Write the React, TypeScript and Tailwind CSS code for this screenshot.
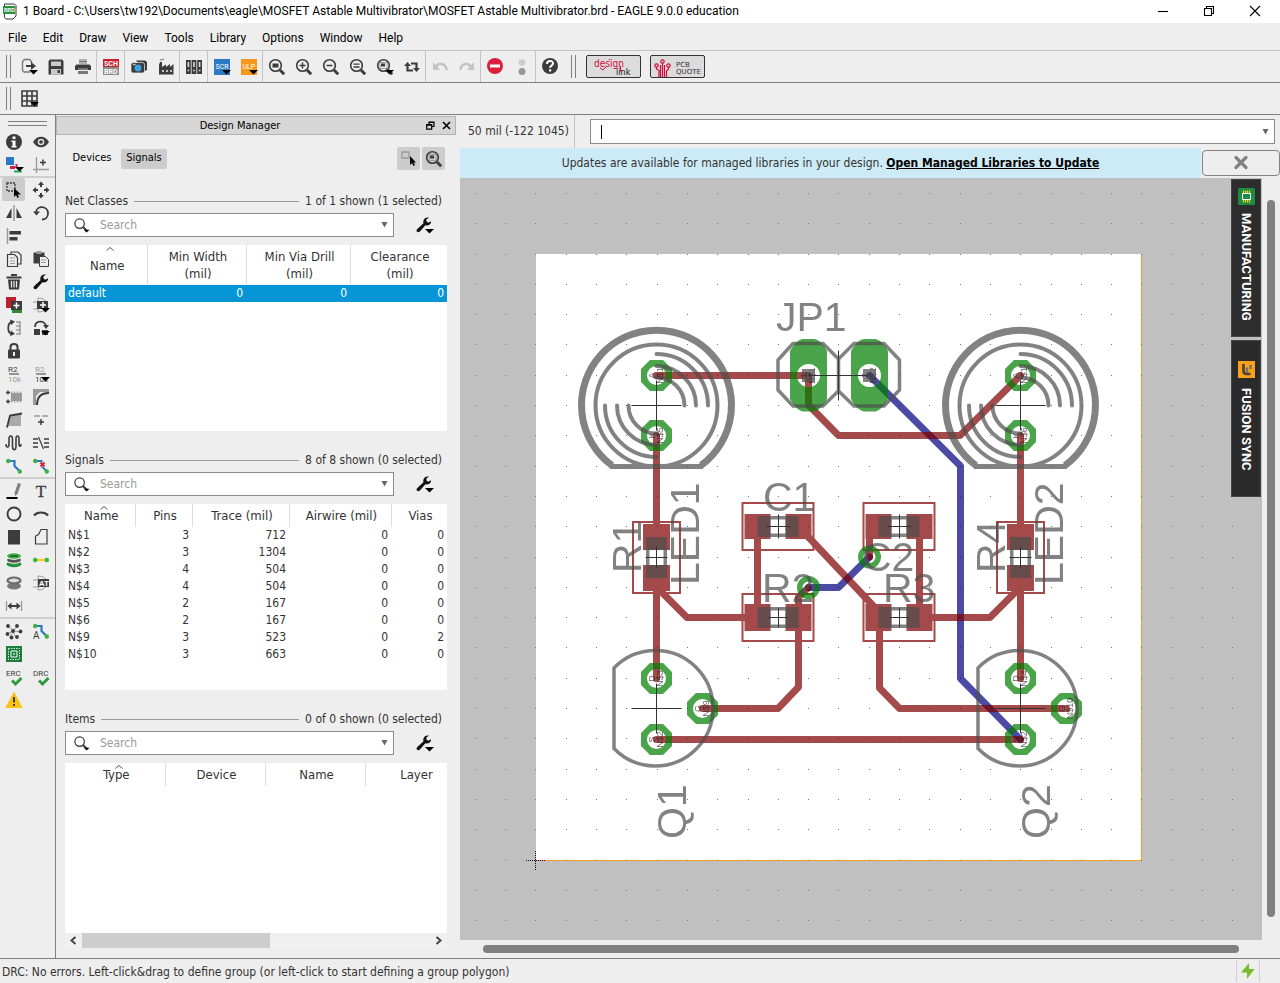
import React from "react";

type Icon = React.ReactNode;
const D = "#3c3c3c";
const G = "#9a9a9a";
const GREEN = "#3faf46";
const BLUE = "#2b78c5";

const drop = <path d="M9 12h9l-4.500 4.500z" fill="#000" />;
const lens = (
  <>
    <circle cx="7.500" cy="7.500" r="5.800" fill="none" stroke={D} strokeWidth="1.600" />
    <path d="M12 12l4.200 4.200" stroke={D} strokeWidth="3" />
  </>
);
const wrench = (
  <path
    d="M16 5.200l-2.600 1.600-2-1.200.1-2.400L14 1.700C11.500.8 8.600 2.400 8.300 5.200c-.1.800 0 1.500.2 2.100L2.300 13c-1 .9-.9 2.100-.2 2.800.8.700 2 .700 2.800-.3l5.500-6.300c3 .8 5.900-1 5.600-4z"
    fill="#111"
  />
);
const route = (
  <>
    <path d="M3.500 4h6v5l5 5" fill="none" stroke={BLUE} strokeWidth="2.200" />
    <circle cx="3.200" cy="4" r="2.200" fill={GREEN} />
    <circle cx="14.800" cy="14.500" r="2.200" fill={GREEN} />
  </>
);
const check = (
  <path d="M7 12.500l3.500 3.500L16.500 10" fill="none" stroke="#2e9a3a" strokeWidth="3" />
);
const iconText = (s: string, x: number, y: number, size: number, fill: string, bold = false) => (
  <text x={x} y={y} fontSize={size} fill={fill} fontWeight={bold ? 700 : 400} fontFamily="Roboto, Liberation Sans, sans-serif">
    {s}
  </text>
);

const icons: Record<string, Icon> = {
  export: (
    <>
      <path d="M11.500 5V3.500l-2-2H4.500l-2 2v9l1.500 1.500h6" fill="none" stroke="#777" strokeWidth="1.400" />
      <path d="M6 8h7" stroke={D} strokeWidth="2" />
      <path d="M11 4l5 4-5 4z" fill={D} />
      {drop}
    </>
  ),
  save: (
    <>
      <path d="M3 1.500h12l1.500 1.500v13.500h-15V3z" fill={D} />
      <path d="M4 3.500h10V8H4zM4 11h10v5.500H4z" fill="#c9c9c9" />
      <path d="M10.500 12h2.500v3h-2.500z" fill={D} />
    </>
  ),
  print: (
    <>
      <path d="M5 1h8v5H5z" fill="#b0b0b0" />
      <path d="M5 3.500h8" stroke="#777" />
      <path d="M1 8l1.500-1.500h13L17 8v4H1z" fill={D} />
      <path d="M4 10h10v6H4z" fill="#777" />
      <path d="M4 12.500h10" stroke="#eee" />
    </>
  ),
  schbrd: (
    <>
      <path d="M1 1h16v8H1z" fill="#c8202e" />
      <path d="M1 9h16v8H1z" fill="#8d8d8d" />
      {iconText("SCH", 2, 8, 7, "#fff", true)}
      {iconText("BRD", 2, 16, 7, "#fff", true)}
    </>
  ),
  camera: (
    <>
      <path d="M6 2.500h9l2 1.500v8l-2 1z" fill={D} />
      <rect x="1" y="4.500" width="13.500" height="10.500" rx="2" fill={D} stroke="#eee" strokeWidth=".7" />
      <circle cx="8" cy="10" r="3.500" fill="#3f9fdf" />
      <path d="M3 6.500h2.500" stroke="#ccc" strokeWidth="1.300" />
    </>
  ),
  factory: (
    <>
      <path d="M2 16.500V7l1-3h2v5l4-2.500V9l4-3v3l3.500-3v10.500z" fill={D} />
      <path d="M3 2.500c1.500-1.500 3-.5 4-1.500" stroke={G} fill="none" strokeWidth="1.500" />
      <path d="M5 13h2m2 0h2m2 0h2" stroke="#eee" strokeWidth="1.500" />
    </>
  ),
  library: (
    <>
      <path d="M1 2h4.800v14H1zM6.600 2h4.800v14H6.600zM12.200 2H17v14h-4.800z" fill={D} />
      <path d="M3.400 4v5M9 4v5M14.600 4v5" stroke="#ddd" strokeWidth="1.600" />
      <path d="M2.600 12.500h1.600M8.200 12.500h1.600M13.800 12.500h1.600" stroke="#ddd" strokeWidth="1.600" />
    </>
  ),
  scr: (
    <>
      <path d="M1 1h16v16H1z" fill={BLUE} />
      {iconText("SCR", 2.500, 11, 7, "#fff")}
      {drop}
    </>
  ),
  ulp: (
    <>
      <path d="M1 1h16v16H1z" fill="#f7981d" />
      {iconText("ULP", 2.500, 11, 7, "#fff")}
      {drop}
    </>
  ),
  fit: <>{lens}<path d="M4.500 5.500h6v4h-6z" fill={D} /></>,
  zin: <>{lens}<path d="M4.500 7.500h6m-3-3v6" stroke={D} strokeWidth="1.500" /></>,
  zout: <>{lens}<path d="M4.500 7.500h6" stroke={D} strokeWidth="1.500" /></>,
  zred: <>{lens}<path d="M4.500 6.200h6M4.500 9h6" stroke={D} strokeWidth="1.300" /></>,
  zsel: (
    <>
      {lens}
      <path d="M4 4.500h7v6H4z" fill="none" stroke={G} />
      <path d="M5 5.500h4v3H5z" fill={D} />
    </>
  ),
  zselDrop: (
    <>
      {lens}
      <path d="M4 4.500h7v6H4z" fill="none" stroke={G} />
      <path d="M5 5.500h4v3H5z" fill={D} />
      {drop}
    </>
  ),
  refresh: (
    <>
      <path d="M4.500 7v5.500H10M13.500 11V5.500H8" fill="none" stroke={D} strokeWidth="2.200" />
      <path d="M1 8l3.500-4L8 8zM10 10h7l-3.500 4z" fill={D} />
    </>
  ),
  undo: <><path d="M5 9c3-5 9-4 11 3" fill="none" stroke="#c4c4c4" strokeWidth="2.500" /><path d="M2 4v8h7z" fill="#c4c4c4" /></>,
  redo: <><path d="M13 9c-3-5-9-4-11 3" fill="none" stroke="#c4c4c4" strokeWidth="2.500" /><path d="M16 4v8H9z" fill="#c4c4c4" /></>,
  stop: <><circle cx="9" cy="8" r="8" fill="#dc1f3c" /><path d="M4 6.500h10v3H4z" fill="#fff" /></>,
  go: <><circle cx="9" cy="4.500" r="3.300" fill="#cbcbcb" /><circle cx="9" cy="13.500" r="3.500" fill="#969696" /></>,
  help: (
    <>
      <circle cx="9" cy="8" r="8" fill={D} />
      <path d="M6 6c0-4 6-4 6-.500 0 2-3 2.200-3 4.200" fill="none" stroke="#fff" strokeWidth="2" />
      <path d="M8 11.300h2.200v2.200H8z" fill="#fff" />
    </>
  ),
  grid: (
    <>
      <path d="M1 1h15v15H1zM6 1v15m5-15v15M1 6h15m-15 5h15" fill="none" stroke={D} strokeWidth="1.600" />
      {drop}
    </>
  ),
  info: <><circle cx="9" cy="9" r="8" fill={D} /><path d="M7.500 3.500h3v2.500h-3zM6.500 7.500h4V13h1v1.500h-5V13h1V9h-1z" fill="#fff" /></>,
  eye: <><path d="M1 9c4-7 12-7 16 0-4 7-12 7-16 0z" fill={D} /><circle cx="9" cy="9" r="3.300" fill="#ddd" /><circle cx="9" cy="9" r="1.800" fill={D} /></>,
  layers: (
    <>
      <path d="M1 1h8v8H1z" fill={BLUE} />
      <path d="M10 5v8H5v-3h5z" fill="#d81b4e" />
      <path d="M9 14.500h8v2H9z" fill="#27a55a" />
      <path d="M11.500 8v4" stroke="#d81b4e" strokeWidth="2" />
      <path d="M10 11h9l-4.500 4.500z" fill="#000" />
    </>
  ),
  mark: <><path d="M4.500 1v16M1 13.500h16" stroke={G} strokeWidth="1.300" /><path d="M8 6.500h6m-3-3v6" stroke={D} strokeWidth="1.500" /></>,
  group: (
    <>
      <path d="M2 2h8v8H2z" fill="none" stroke={D} strokeWidth="1.300" strokeDasharray="2 1" />
      <path d="M9 7v9l2-2 1.500 3 1.500-1-1.500-2.500H16z" fill="#000" />
    </>
  ),
  cursor: (
    <>
      <path d="M2 2h7v6H2z" fill="none" stroke={G} strokeWidth="1.300" />
      <path d="M10 6v9l2-2 1.500 3 1.500-1-1.500-2.500H16z" fill="#000" />
    </>
  ),
  move: <path d="M9 .5L12 4h-2v2H8V4H6zM9 17.500L12 14h-2v-2H8v2H6zM.5 9L4 6v2h2v2H4v2zM17.500 9L14 6v2h-2v2h2v2z" fill={D} />,
  mirror: <><path d="M9 1v16" stroke={G} strokeWidth="1.500" /><path d="M6.500 4v10H1zM11.500 4v10H17z" fill={D} /></>,
  rotate: <><path d="M4 8c1-7 12-6.500 12 1.500 0 4-3 6-6 6" fill="none" stroke={D} strokeWidth="1.800" /><path d="M1 7.500h7l-3.500 4z" fill={D} /></>,
  align: <><path d="M2.500 1v16" stroke={G} strokeWidth="1.500" /><path d="M4.500 4H16v3.500H4.500zM4.500 10h8v3.500h-8z" fill={D} /></>,
  copy: (
    <>
      <path d="M6 4V2h7l3 3v9h-3" fill="none" stroke={D} strokeWidth="1.200" />
      <path d="M2.500 4.500h7l3 3v9h-10z" fill="#eee" stroke={D} strokeWidth="1.200" />
      <path d="M5 8h5M5 11h5M5 13.500h5" stroke={G} />
    </>
  ),
  paste: (
    <>
      <path d="M1.500 2.500h11v11h-11z" fill={D} /><path d="M4.500 1h5v3h-5z" fill={G} />
      <path d="M7.500 6.500h6l3 3v7h-9z" fill="#eee" stroke={D} /><path d="M9 10h5m-5 2.500h5" stroke={G} />
    </>
  ),
  trash: <><path d="M1.500 3.500h15v2h-15zM6 1h6v2H6zM3 6.500h12l-1 10H4z" fill={D} /><path d="M6.500 8v6.500M9 8v6.500M11.500 8v6.500" stroke="#eee" strokeWidth="1.200" /></>,
  wrench,
  wrenchDrop: <>{wrench}<path d="M10 13h9l-4.500 4.500z" fill="#000" /></>,
  add: <><path d="M1 1h10v11H1z" fill="#c0202e" /><path d="M7 13h10v4H7z" fill="#2c8a35" /><path d="M6 5h11v9H6z" fill={D} /><path d="M8.500 9.500h6m-3-3v6" stroke="#fff" strokeWidth="1.600" /></>,
  addPart: <><path d="M1 6h4m-4 7h4M6 2c6 0 9 3 9 7s-3 7-9 7z" fill="none" stroke={G} /><path d="M5 5h11v8H5z" fill={D} /><path d="M8 9h6m-3-3v6" stroke="#fff" strokeWidth="1.500" />{drop}</>,
  pinswap: <><path d="M15 2v14M11 3h4m-4 4h4m-4 4h4m-4 4h4" stroke={G} strokeWidth="1.500" /><path d="M7 3C2 4 2 14 7 15" fill="none" stroke={D} strokeWidth="1.800" /><path d="M5 .5l5 2L6 6zM6 11.500l4 3.500-5 2z" fill={D} /></>,
  replace: <><path d="M3 8c0-7 10-7 11-1" fill="none" stroke={D} strokeWidth="1.800" /><path d="M11 6h6l-3 4zM2 10h6v6H2zM10 11h6v5h-6z" fill={D} />{drop}</>,
  lock: <><path d="M5.500 8V5c0-4 7-4 7 0v3" fill="none" stroke={D} strokeWidth="2" /><rect x="3" y="7.500" width="12" height="9" rx="1" fill={D} /><path d="M9 10v4" stroke="#eee" strokeWidth="2" /></>,
  name: <>{iconText("R2", 3, 7, 8, D)}<path d="M4 9h10" stroke={D} />{iconText("10k", 3, 17, 8, G)}</>,
  value: <>{iconText("R2", 3, 7, 8, G)}<path d="M4 9h10" stroke={D} />{iconText("10k", 3, 17, 8, D)}{drop}</>,
  smash: <><path d="M6 5h11v8H6z" fill={G} /><path d="M6.500 3.500v11m3-11v11m3-11v11m3-11v11" stroke={G} strokeWidth="1.200" /><path d="M1 4.500h4m-2-2v4M1 13.500h4m-2-2v4" stroke={D} strokeWidth="1.300" /></>,
  miter: <><path d="M1 1h16v3H8L4 8v9H1z" fill={G} /><path d="M5 17c0-8 4-12 12-12" fill="none" stroke={D} strokeWidth="2" /></>,
  split: <><path d="M5 5l11-2v12H3z" fill="#aaa" /><path d="M2 16.500L5 4.500l12-2" fill="none" stroke={D} strokeWidth="1.800" /></>,
  optimize: <><path d="M2 5h6m2 0h6" stroke={G} strokeWidth="1.300" /><path d="M6 11h6m-3-3v6" stroke={D} strokeWidth="1.500" /></>,
  meander: <path d="M1 10c0 4 3 4 3 0V5c0-4 3.500-4 3.500 0v7c0 5 3.500 5 3.500 0V5c0-4 3-4 3 0v5c0 3 2 3 2 0" fill="none" stroke={D} strokeWidth="1.600" />,
  ripup: <><path d="M1 5h5m-5 4h5m-5 4h5m6-8h5m-5 4h5m-5 4h5" stroke={D} strokeWidth="1.500" /><path d="M6.500 3l5 12" stroke={D} strokeWidth="1.200" /></>,
  route,
  unroute: <><path d="M3.500 4h6v5l5 5" fill="none" stroke={BLUE} strokeWidth="2" /><circle cx="3.200" cy="4" r="2.200" fill={GREEN} /><circle cx="14.800" cy="14.500" r="2.200" fill={GREEN} /><path d="M8 5h5v5H8z" fill="#fff" /><path d="M8.500 5.500l4 4m0-4l-4 4" stroke="#d81b2e" strokeWidth="2" /></>,
  line: <><path d="M1.500 16h11" stroke="#000" strokeWidth="2" /><path d="M13 1l3 1-3.500 10-2.500 2-.5-3z" fill="#808080" /></>,
  text: <text x="9" y="15" fontSize="17" textAnchor="middle" fontFamily="Liberation Serif, serif" fill={D} stroke={D} strokeWidth=".3">T</text>,
  circle: <circle cx="9" cy="9" r="6.500" fill="none" stroke={D} strokeWidth="1.900" />,
  arc: <path d="M2 10.500c3-4 11-4 14 0" fill="none" stroke={D} strokeWidth="2.200" />,
  rect: <path d="M3 2h12v14.500H3z" fill={D} />,
  polygon: <path d="M3.500 16V8l3-1.500 2.500-5h6V16z" fill="none" stroke={D} strokeWidth="1.200" />,
  via: <><ellipse cx="9" cy="13" rx="7.500" ry="3.300" fill="#27923a" /><ellipse cx="9" cy="9" rx="7.500" ry="3.300" fill="#555" stroke="#fff" /><ellipse cx="9" cy="5" rx="7.500" ry="3.300" fill={GREEN} stroke="#fff" /><path d="M5 5h8" stroke="#17602a" strokeWidth="1.500" /></>,
  airwire: <><path d="M3 9h12" stroke="#f4cf1c" strokeWidth="2.200" /><circle cx="3.200" cy="9" r="2.300" fill={GREEN} /><circle cx="14.800" cy="9" r="2.300" fill={GREEN} /></>,
  hole: <><ellipse cx="9" cy="12" rx="7" ry="3.500" fill="#777" /><ellipse cx="9" cy="6.500" rx="6.500" ry="3" fill="#ddd" stroke="#6b6b6b" strokeWidth="2.200" /></>,
  attr: <><path d="M1 6h4m-4 7h4M6 2c6 0 9 3 9 7s-3 7-9 7z" fill="none" stroke={G} /><path d="M6 5h11v8H6z" fill={D} />{iconText("AT", 7, 12, 8, "#fff", true)}</>,
  dimension: <><path d="M1.500 4v10m15-10v10" stroke={G} strokeWidth="1.300" /><path d="M4 9h10" stroke={D} strokeWidth="2" /><path d="M2.500 9l4-3.500v7zM15.500 9l-4-3.500v7z" fill={D} /></>,
  ratsnest: <><path d="M8 9L3 3.500M8 9l5-5.500M8 9l8 1M8 9l-6 3M8 9l3 7M8 9l-3 6" stroke={G} />{[[8, 9], [3, 4], [12, 4], [15.500, 9.500], [2.500, 12], [6.500, 15.500], [12, 15]].map(([x, y]) => <circle key={`${x}-${y}`} cx={x} cy={y} r="1.900" fill={D} />)}</>,
  autoroute: <>{route}{iconText("A", 1, 17, 10, D)}</>,
  fusion: <><path d="M1 1h16v16H1z" fill="#1d7d3b" /><path d="M3.500 3.500h11v11h-11z" fill="none" stroke="#c5e4cd" strokeDasharray="1.500 1" /><path d="M6 6h6v6H6z" fill="none" stroke="#fff" /><path d="M8 8h2v2H8z" fill="#8fcf9f" /></>,
  erc: <>{iconText("ERC", 1, 8, 8, D)}{check}</>,
  drc: <>{iconText("DRC", 1, 8, 8, D)}{check}</>,
  warn: <><path d="M9 1.500L17 16.500H1z" fill="#f9c416" stroke="#f9c416" strokeLinejoin="round" /><path d="M9 6v5.500M9 13v2" stroke="#333" strokeWidth="1.800" /></>,
};

function Glyph({ name }: { name: string }) {
  return (
    <svg viewBox="0 0 18 18" className="size-[18px] shrink-0 overflow-visible" aria-hidden="true">
      {icons[name]}
    </svg>
  );
}

function Tool({ name, active }: { name: string; active?: boolean }) {
  return (
    <button
      aria-label={name}
      className={`flex size-[23px] shrink-0 items-center justify-center rounded-[2px] ${active ? "bg-[#cccccc]" : ""}`}
    >
      <Glyph name={name} />
    </button>
  );
}

const Handle = () => <div className="my-1 w-[5px] shrink-0 self-stretch border-x border-[#808080]" />;

const mainTools = [
  ["export", "save", "print"],
  ["schbrd"],
  ["camera", "factory"],
  ["library"],
  ["scr", "ulp"],
  ["fit", "zin", "zout", "zred", "zselDrop", "refresh"],
  ["undo", "redo"],
  ["stop", "go"],
  ["help"],
];

const sideTools: string[][] = [
  ["info", "eye", "layers", "mark"],
  [
    "group", "move", "mirror", "rotate", "align", "", "copy", "paste", "trash", "wrench", "add", "addPart",
    "pinswap", "replace", "lock", "", "name", "value", "smash", "miter", "split", "optimize", "meander", "ripup",
    "route", "unroute",
  ],
  ["line", "text", "circle", "arc", "rect", "polygon", "via", "airwire", "hole", "attr", "dimension", ""],
  ["ratsnest", "autoroute", "fusion", "", "erc", "drc", "warn", ""],
];

function TitleBar() {
  return (
    <header className="flex h-[23px] shrink-0 items-start bg-white pr-0.5 pl-[3px] text-black">
      <svg viewBox="0 0 14 17" className="mt-[3px] h-[17px] w-[14px]" aria-hidden="true">
        <path d="M2 1h9.500l1.500 1.500V13l-3 3H3l-1.500-1.500V1z" fill="#fff" stroke="#333" />
        <path d="M0 3h12v8H0z" fill="#27923a" />
        <text x="1" y="9" fontSize="5" fontWeight="700" fill="#fff" fontFamily="Liberation Sans, sans-serif">BRD</text>
      </svg>
      <h1 className="ml-1.5 flex-1 font-['Roboto','Noto_Sans',sans-serif] text-[12px] leading-[23px] whitespace-nowrap">
        1 Board - C:\Users\tw192\Documents\eagle\MOSFET Astable Multivibrator\MOSFET Astable Multivibrator.brd - EAGLE
        9.0.0 education
      </h1>
      <div className="flex">
        {[
          ["Minimize", "M1 6.500h10"],
          ["Restore", "M1.500 3.500h7v7h-7zM3.500 3.500v-2h7v7h-2"],
          ["Close", "M1 1l10 10M11 1L1 11"],
        ].map(([label, d]) => (
          <button key={label} aria-label={label} className="flex h-[21px] w-[46px] items-center justify-center">
            <svg viewBox="0 0 12 12" className="size-3" aria-hidden="true">
              <path d={d} fill="none" stroke="#000" strokeWidth="1.100" />
            </svg>
          </button>
        ))}
      </div>
    </header>
  );
}

function MainToolbar() {
  return (
    <div className="flex h-8 shrink-0 items-center border-b border-[#808080] pl-1.5">
      <Handle />
      <div className="ml-1 flex self-stretch">
        {mainTools.map((g, i) => (
          <div key={i} className={`flex items-center ${i ? "border-l border-[#c4c4c4]" : ""}`}>
            {g.map((n) => (
              <div key={n} className="px-0.5">
                <Tool name={n} />
              </div>
            ))}
          </div>
        ))}
      </div>
      <div className="ml-2 flex self-stretch">
        <Handle />
      </div>
      <button aria-label="Design link" className="ml-2.5 h-[23px] w-[55px] rounded-[2px] border border-[#333] bg-[#dcdcdc]">
        <svg viewBox="0 0 53 21" className="h-[21px] w-[53px]" aria-hidden="true">
          <text x="7" y="11" fontSize="10" fill="#d6093c" fontFamily="DejaVu Sans Condensed, sans-serif">design</text>
          <text x="29" y="19" fontSize="9" fill="#111" fontFamily="DejaVu Sans Condensed, sans-serif">link</text>
          <path d="M33.500 10v5M13 12l3 2 3-3M22.500 3v1" stroke="#d6093c" fill="none" />
          <circle cx="33.500" cy="14.500" r="1" fill="#d6093c" />
        </svg>
      </button>
      <button aria-label="PCB quote" className="ml-[9px] h-[23px] w-[55px] rounded-[2px] border border-[#333] bg-[#dcdcdc]">
        <svg viewBox="0 0 53 21" className="h-[21px] w-[53px]" aria-hidden="true">
          <g fill="none" stroke="#d6093c" strokeWidth="1.200">
            <path d="M5.500 11v2l2.500 1.500V21M9.500 21V9M11.500 7v14M13.500 9v12M17.500 11v2L15.500 15V21" />
            <circle cx="5.500" cy="9.500" r="1.700" /><circle cx="11.500" cy="5.500" r="1.700" /><circle cx="17.500" cy="9.500" r="1.700" />
          </g>
          <text x="25" y="11" fontSize="7" fill="#333" fontFamily="DejaVu Sans, sans-serif">PCB</text>
          <text x="25" y="18" fontSize="7" fill="#333" fontFamily="DejaVu Sans, sans-serif">QUOTE</text>
        </svg>
      </button>
    </div>
  );
}

function ToolPalette() {
  return (
    <aside className="flex w-14 shrink-0 flex-col border-r border-[#808080]">
      <div className="mx-2 mt-1.5 mb-1 h-[5px] shrink-0 border-y border-[#808080]" />
      {sideTools.map((g, i) => (
        <div key={i} className={`grid grid-cols-[23px_23px] gap-x-1 px-0.5 ${i ? "border-t-2 border-[#cfcfcf]" : ""}`}>
          {g.map((n, j) => (n ? <Tool key={n} name={n} active={n === "group"} /> : <span key={j} />))}
        </div>
      ))}
    </aside>
  );
}

function Search({ label }: { label: string }) {
  return (
    <div className="mt-[3px] flex h-6 items-center">
      <label className="flex h-6 w-[329px] items-center border border-[#8c8c8c] bg-white pl-[7px]">
        <svg viewBox="0 0 18 18" className="size-[17px]" aria-hidden="true">
          <circle cx="7" cy="7" r="5" fill="none" stroke={D} strokeWidth="1.300" />
          <path d="M10.500 10.500l4 4" stroke={D} strokeWidth="2.200" />
          <path d="M11.500 13.500h6l-3 3z" fill="#000" />
        </svg>
        <input
          aria-label={`Search ${label}`}
          placeholder="Search"
          className="ml-2.5 min-w-0 flex-1 bg-transparent text-[12px] outline-none placeholder:text-[#9a9a9a]"
        />
        <svg viewBox="0 0 7 6" className="mr-[5px] h-1.5 w-[7px]" aria-hidden="true">
          <path d="M.5 0h6L3.500 5.500z" fill="#666" />
        </svg>
      </label>
      <div className="ml-[18px]">
        <Tool name="wrenchDrop" />
      </div>
    </div>
  );
}

type TableProps = { cols: [string, number][]; rows: string[][]; tall?: boolean; selected?: boolean };

function DataTable({ cols, rows, tall, selected }: TableProps) {
  const total = cols.reduce((s, c) => s + c[1], 0);
  return (
    <table className="table-fixed border-collapse text-[12px]" style={{ width: total }}>
      <colgroup>
        {cols.map(([c, w]) => (
          <col key={c} style={{ width: w }} />
        ))}
      </colgroup>
      <thead>
        <tr className={tall ? "h-10" : "h-[23px]"}>
          {cols.map(([c], i) => (
            <th key={c} className="relative border-r border-[#dedede] p-0 text-[13px] leading-[17px] font-normal">
              {i === 0 && (
                <svg viewBox="0 0 8 4" className="absolute top-0.5 left-1/2 h-1 w-2" aria-hidden="true">
                  <path d="M.5 3.500L4 .5l3.500 3" fill="none" stroke="#555" />
                </svg>
              )}
              <span className="block pl-[3px] whitespace-pre-line">{c}</span>
            </th>
          ))}
        </tr>
      </thead>
      <tbody>
        {rows.map((r) => (
          <tr key={r[0]} className={`h-[17px] ${selected ? "bg-[#0696d7] text-white" : ""}`}>
            {r.map((v, i) => (
              <td key={i} className={`px-[3px] py-0 leading-[17px] ${i ? "text-right" : ""}`}>
                {v}
              </td>
            ))}
          </tr>
        ))}
      </tbody>
    </table>
  );
}

function Section({ title, info, grow, children }: { title: string; info: string; grow?: boolean; children: React.ReactNode }) {
  return (
    <section className={`mr-[9px] ml-[9px] flex flex-col ${grow ? "min-h-0 flex-1" : "mb-5"}`}>
      <div className="flex h-[18px] items-center gap-1.5 pr-[5px] text-[12px]">
        <h3>{title}</h3>
        <div className="h-px flex-1 bg-[#999]" />
        <span>{info}</span>
      </div>
      <Search label={title} />
      <div className={`mt-2 overflow-hidden bg-white ${grow ? "min-h-0 flex-1" : "h-[186px]"}`}>{children}</div>
    </section>
  );
}

const signals = [
  ["N$1", "3", "712", "0", "0"],
  ["N$2", "3", "1304", "0", "0"],
  ["N$3", "4", "504", "0", "0"],
  ["N$4", "4", "504", "0", "0"],
  ["N$5", "2", "167", "0", "0"],
  ["N$6", "2", "167", "0", "0"],
  ["N$9", "3", "523", "0", "2"],
  ["N$10", "3", "663", "0", "0"],
];

function DesignManager() {
  return (
    <div className="flex w-[400px] shrink-0 flex-col">
      <div className="mt-px flex h-[19px] shrink-0 items-center border border-[#b4b4b4] bg-[#d6d6d6] text-black">
        <h2 className="flex-1 text-center text-[11px] leading-[21px]">Design Manager</h2>
        <button aria-label="Float" className="p-[3px]">
          <svg viewBox="0 0 9 9" className="size-[9px]" aria-hidden="true">
            <path d="M.7 3.700h5v4.500h-5zM3 3.500V1h5v4.500H6M3 1.500h5M.7 4.200h5" fill="none" stroke="#000" strokeWidth="1.200" />
          </svg>
        </button>
        <button aria-label="Close panel" className="px-1 py-[3px]">
          <svg viewBox="0 0 9 9" className="size-[9px]" aria-hidden="true">
            <path d="M1 1l7 7M8 1L1 8" stroke="#000" strokeWidth="1.600" />
          </svg>
        </button>
      </div>
      <div className="mt-3 mb-[22px] flex h-[23px] items-center pr-[11px] pl-[9px] text-[11px] text-black">
        <button className="h-5 w-[54px]">Devices</button>
        <button className="ml-0.5 h-5 w-[46px] rounded-[2px] bg-[#cccccc]">Signals</button>
        <div className="flex-1" />
        <div className="flex gap-0.5">
          <Tool name="cursor" active />
          <Tool name="zsel" active />
        </div>
      </div>
      <Section title="Net Classes" info="1 of 1 shown (1 selected)">
        <DataTable
          tall
          selected
          cols={[["Name", 82], ["Min Width\n(mil)", 99], ["Min Via Drill\n(mil)", 104], ["Clearance\n(mil)", 97]]}
          rows={[["default", "0", "0", "0"]]}
        />
      </Section>
      <Section title="Signals" info="8 of 8 shown (0 selected)">
        <DataTable
          cols={[["Name", 70], ["Pins", 57], ["Trace (mil)", 97], ["Airwire (mil)", 102], ["Vias", 56]]}
          rows={signals}
        />
      </Section>
      <Section title="Items" info="0 of 0 shown (0 selected)" grow>
        <DataTable cols={[["Type", 100], ["Device", 100], ["Name", 100], ["Layer", 100]]} rows={[]} />
      </Section>
      <div className="mx-[9px] mb-2.5 flex h-[15px] shrink-0 items-center bg-[#f0f0f0]">
        <svg viewBox="0 0 17 15" className="h-[15px] w-[17px]" aria-hidden="true">
          <path d="M10.500 4L6.500 7.500l4 3.500" fill="none" stroke="#444" strokeWidth="2" />
        </svg>
        <div className="flex-1 self-stretch">
          <div className="h-full w-[54%] bg-[#cdcdcd]" />
        </div>
        <svg viewBox="0 0 17 15" className="h-[15px] w-[17px]" aria-hidden="true">
          <path d="M6.500 4l4 3.500-4 3.500" fill="none" stroke="#444" strokeWidth="2" />
        </svg>
      </div>
    </div>
  );
}

/* ---- board drawing ---- */

const RED = "#7f0000";
const octagon = (cx: number, cy: number, r: number) => {
  const k = r * 0.42;
  return `M${cx - k} ${cy - r}H${cx + k}L${cx + r} ${cy - k}V${cy + k}L${cx + k} ${cy + r}H${cx - k}L${cx - r} ${cy + k}V${cy - k}z`;
};
const hole = (cx: number, cy: number, r: number) =>
  `M${cx - r} ${cy}a${r} ${r} 0 1 0 ${2 * r} 0a${r} ${r} 0 1 0 ${-2 * r} 0z`;

const pads: [number, number, string, string][] = [
  [656.5, 375.5, "A", "N$1"],
  [656.5, 435.5, "K", "N$5"],
  [1020.5, 375.5, "A", "N$1"],
  [1020.5, 435.5, "K", "N$6"],
  [656.5, 678.5, "D", "N$3"],
  [702.5, 708.5, "G", "N$9"],
  [656.5, 739.5, "S", "N$2"],
  [1020.5, 678.5, "D", "N$4"],
  [1066.5, 708.5, "G", "N$10"],
  [1020.5, 739.5, "S", "N$2"],
];
const longPads: [number, string, string][] = [
  [808.5, "1", "N$1"],
  [869.5, "2", "N$2"],
];
const vias: [number, number][] = [
  [808.5, 587.5],
  [869.5, 557],
];
const chips: [number, number, number, boolean][] = [
  [778, 526.5, 25, false],
  [899, 526.5, 25, false],
  [778, 617.5, 27, false],
  [899, 617.5, 27, false],
  [656.5, 557.5, 27, true],
  [1020.5, 557.5, 27, true],
];
const traces = [
  "M656.500 375.500H808.500V405L838.500 435.500H960L1020.500 375.500",
  "M656.500 435.500V524M656.500 590V678.500M656.500 587L687 617.500H745",
  "M757.500 530V610M798 526L879 612M798.500 610V597L808.500 587.500",
  "M798.500 617V687L778 708.500H702.500M869.500 526V557M919.500 530V610",
  "M930 617.500H990L1020.500 587M1020.500 590V678.500M1020.500 435.500V524",
  "M879.500 617V688L899.500 708.500H1066.500M656.500 739.500H1020.500",
];
const labels: [string, number, number, boolean][] = [
  ["JP1", 776, 331, false],
  ["C1", 763, 511, false],
  ["C2", 862, 571, false],
  ["R2", 762, 602, false],
  ["R3", 883, 602, false],
  ["R1", 641, 573, true],
  ["R4", 1005, 573, true],
  ["LED1", 699, 585, true],
  ["LED2", 1063, 585, true],
  ["Q1", 686, 839, true],
  ["Q2", 1050, 839, true],
];

function GridDots() {
  let d = "";
  for (let i = -2; i <= 23; i++)
    for (let j = -2; j <= 22; j++) d += `M${Math.round(535.4 + 30.3 * i)} ${Math.floor(860 - 30.3 * j)}h1v1h-1z`;
  return <path d={d} fill="#777" />;
}

function Led({ dx }: { dx: number }) {
  return (
    <g transform={`translate(${dx} 0)`} fill="none" stroke="#4f4f4f">
      <path d="M612 465.500A75 75 0 1 1 701 465.500" strokeWidth="7" />
      <path d="M610 466.500H703" strokeWidth="5" />
      <circle cx="656.500" cy="405.500" r="61" strokeWidth="4" />
      <g strokeWidth="4" strokeLinecap="round">
        <path d="M656.500 354A51.500 51.500 0 0 1 708 405.500M656.500 366A39.500 39.500 0 0 1 696 405.500M656.500 377.500A28 28 0 0 1 684.500 405.500" />
        <path d="M605 405.500A51.500 51.500 0 0 0 656.500 457M617 405.500A39.500 39.500 0 0 0 656.500 445M628.500 405.500A28 28 0 0 0 656.500 433.500" />
      </g>
    </g>
  );
}

function Board() {
  return (
    <svg viewBox="460 178 802 762" preserveAspectRatio="xMinYMin meet" className="block h-full w-full" role="img" aria-label="Board layout">
      <path d="M536 254h605.500v606.500H536z" fill="#fff" />
      <path d="M1141.500 254v606.500H536" fill="none" stroke="#f5a01e" />
      <GridDots />
      <g opacity=".706" fill="none" stroke="#00007f" strokeWidth="7" strokeLinejoin="round" strokeLinecap="round">
        <path d="M869.500 375.500L960.500 466V678.500L1020.500 739.500M808.500 587.500H838.500L869.500 557" />
      </g>
      <g opacity=".706" stroke={RED} fill={RED}>
        <path d={traces.join("")} fill="none" strokeWidth="7" strokeLinejoin="round" strokeLinecap="round" />
        {chips.map(([x, y, h, vertical]) => (
          <g key={`${x}-${y}`} transform={`translate(${x} ${y}) rotate(${vertical ? 90 : 0})`}>
            <path d="M-35.500 -23.500h71v47h-71z" fill="none" strokeWidth="2" />
            <path d={`M-33.500 ${-h / 2}h26v${h}h-26zM7.500 ${-h / 2}h26v${h}h-26z`} stroke="none" />
          </g>
        ))}
      </g>
      <g opacity=".706" fill="#007f00" fillRule="evenodd">
        {pads.map(([x, y]) => (
          <path key={`${x}-${y}`} d={octagon(x, y, 15.5) + hole(x, y, 9.5)} />
        ))}
        {longPads.map(([x]) => (
          <path
            key={x}
            d={`M${x - 6} 339h12q7 1.500 12.500 12v48q-5.500 10.500 -12.500 12.500h-12q-7 -2 -12.500 -12.500v-48q5.500 -10.500 12.500 -12z` + hole(x, 375.5, 11.5)}
          />
        ))}
        {vias.map(([x, y]) => (
          <path key={x} d={hole(x, y, 11.5) + hole(x, y, 6)} />
        ))}
      </g>
      <g opacity=".706">
        <Led dx={0} />
        <Led dx={364} />
        <g fill="none" stroke="#4f4f4f" strokeWidth="3.500">
          <path d="M614 668A57.700 57.700 0 1 1 614 748.500z" />
          <path d="M978 668A57.700 57.700 0 1 1 978 748.500z" />
          <path d="M778 360L793 343.500H823L838.500 359L854 343.500H884L899.500 360V390L884 406H854L838.500 391L823 406H793L778 390zM838.500 359V391" />
        </g>
        {chips.map(([x, y, , vertical]) => (
          <g key={`${x}-${y}`} transform={`translate(${x} ${y}) rotate(${vertical ? 90 : 0})`} fill="#4f4f4f">
            <path d="M-20.500 -10.500h13v21h-13zM7.500 -10.500h13v21h-13zM-8 -10.500h16v3.500h-16zM-8 7h16v3.500h-16z" />
          </g>
        ))}
        <path d="M802 369h13v13h-13zM863 369h13v13h-13z" fill="#4f4f4f" />
        {labels.map(([t, x, y, r]) => (
          <text
            key={t}
            transform={`translate(${x} ${y}) rotate(${r ? -90 : 0})`}
            fontSize="41"
            fill="#4f4f4f"
            fontFamily="Liberation Sans, Arial, sans-serif"
          >
            {t}
          </text>
        ))}
        {[...pads, ...longPads.map(([x, a, b]): [number, number, string, string] => [x, 375.5, a, b])].map(([x, y, a, b]) => (
          <g key={`${x}-${y}`} fontSize="9" fill="#222" textAnchor="middle" fontFamily="Liberation Sans, Arial, sans-serif">
            <text transform={`translate(${x - 2} ${y}) rotate(-90)`}>{a}</text>
            <text transform={`translate(${x + 6} ${y}) rotate(-90)`}>{b}</text>
          </g>
        ))}
      </g>
      <g stroke="#333">
        {[
          [656.5, 405.5, 25, 25], [1020.5, 405.5, 25, 25], [656.5, 708.5, 25, 25], [1020.5, 708.5, 25, 25], [838.5, 375.5, 30, 25],
          [778.5, 526.5, 12, 12], [899.5, 526.5, 12, 12], [778.5, 617.5, 10, 10], [899.5, 617.5, 10, 10], [656.5, 557.5, 11, 11],
          [1020.5, 557.5, 11, 11],
        ].map(([x, y, w, h]) => (
          <path key={`${x}-${y}`} d={`M${x - w} ${y}h${2 * w}M${x} ${y - h}v${2 * h}`} />
        ))}
      </g>
      <path d="M526 860.500h20M535.500 851v20" stroke="#111" strokeDasharray="1 1" />
    </svg>
  );
}

function Workspace() {
  return (
    <div className="flex min-w-0 flex-1 flex-col pl-1">
      <div className="flex h-[33px] shrink-0 items-center pr-[5px]">
        <span className="self-stretch border-r border-[#c4c4c4] pr-[5px] pl-2 text-[12px] leading-[33px] whitespace-nowrap">
          50 mil (-122 1045)
        </span>
        <div className="ml-[15px] flex h-[25px] flex-1 items-center border border-[#8c8c8c] bg-white pr-[5px] pl-2.5">
          <span className="h-3.5 w-px bg-black" />
          <input aria-label="Command" className="min-w-0 flex-1 bg-transparent text-[12px] outline-none" />
          <svg viewBox="0 0 7 6" className="h-1.5 w-[7px]" aria-hidden="true">
            <path d="M.5 0h6L3.500 5.500z" fill="#666" />
          </svg>
        </div>
      </div>
      <div className="flex h-[30px] shrink-0 items-center">
        <p className="flex-1 self-stretch bg-[#cdebf6] text-center text-[12px] leading-[30px] whitespace-nowrap">
          Updates are available for managed libraries in your design.{" "}
          <a href="#update" className="font-bold text-black underline">
            Open Managed Libraries to Update
          </a>
        </p>
        <button aria-label="Dismiss" className="ml-px flex h-[26px] w-[78px] items-center justify-center rounded-[4px] border border-[#828282]">
          <svg viewBox="0 0 16 16" className="size-4" aria-hidden="true">
            <path d="M3 2.500l10 10M13 2.500l-10 10" stroke="#808080" strokeWidth="3.200" strokeLinecap="round" />
          </svg>
        </button>
      </div>
      <div className="flex min-h-0 flex-1">
        <div className="relative min-w-0 flex-1 overflow-hidden bg-[#c0c0c0]">
          <Board />
          <div className="absolute top-px right-px flex flex-col gap-[3px]">
            <button className="flex h-[158px] w-[30px] flex-col items-center border border-[#444] bg-[#2d2d2d] pt-2">
              <svg viewBox="0 0 17 17" className="size-[17px]" aria-hidden="true">
                <rect width="17" height="17" rx="1.500" fill="#1f8c44" />
                <path d="M5.500 2.500v12M7.500 2.500v12M9.500 2.500v12M11.500 2.500v12" stroke="#f0d020" strokeWidth="1.200" />
                <path d="M4.500 5.500h8v6h-8z" fill="#1f8c44" stroke="#fff" />
              </svg>
              <span className="mt-2 font-['Roboto',sans-serif] text-[13px] leading-[14px] font-bold text-white [writing-mode:vertical-rl]">
                MANUFACTURING
              </span>
            </button>
            <button className="flex h-[157px] w-[30px] flex-col items-center border border-[#444] bg-[#2b2b2b] pt-5">
              <svg viewBox="0 0 17 17" className="size-[17px]" aria-hidden="true">
                <path d="M0 0h17v17H0z" fill="#f9a11b" />
                <path d="M5.500 3v7q0 3 3 3h4" fill="none" stroke="#4a4035" strokeWidth="2.600" />
                <path d="M9 12V6.500M12.500 8V4" stroke="#777067" strokeWidth="2.400" />
              </svg>
              <span className="mt-2.5 font-['Roboto',sans-serif] text-[13px] leading-[14px] font-bold text-white [writing-mode:vertical-rl]">
                FUSION SYNC
              </span>
            </button>
          </div>
        </div>
        <div className="w-[18px] shrink-0 pt-[22px] pr-[5px] pb-[23px] pl-[5px]">
          <div className="h-full rounded-full bg-[#808080]" />
        </div>
      </div>
      <div className="h-[18px] shrink-0 pt-[5px] pr-[41px] pl-[23px]">
        <div className="h-2 rounded-full bg-[#808080]" />
      </div>
    </div>
  );
}

const menus = ["File", "Edit", "Draw", "View", "Tools", "Library", "Options", "Window", "Help"];

export default function App() {
  return (
    <div className="flex h-screen min-h-[760px] flex-col overflow-hidden bg-[#eeeeee] font-['DejaVu_Sans_Condensed','Noto_Sans',sans-serif] text-[#333]">
      <TitleBar />
      <nav className="flex h-7 shrink-0 items-center border-b border-[#c4c4c4] font-['Roboto','Noto_Sans',sans-serif] text-[12px] text-black">
        {menus.map((m) => (
          <button key={m} className="px-2 pt-0.5">
            {m}
          </button>
        ))}
      </nav>
      <MainToolbar />
      <div className="flex h-8 shrink-0 items-center border-b border-[#808080] pl-1.5">
        <Handle />
        <div className="ml-[7px]">
          <Tool name="grid" />
        </div>
      </div>
      <main className="flex min-h-0 flex-1">
        <ToolPalette />
        <DesignManager />
        <Workspace />
      </main>
      <footer className="flex h-[25px] shrink-0 items-center border-t border-[#808080] pl-0.5 text-[12px]">
        <span className="flex-1 pt-0.5">
          DRC: No errors. Left-click&amp;drag to define group (or left-click to start defining a group polygon)
        </span>
        <span className="mr-5 flex h-[22px] w-6 items-center justify-center border-x border-[#cfcfcf]">
          <svg viewBox="0 0 14 16" className="h-4 w-3.5" aria-hidden="true">
            <path d="M8 0L0 9.500h6V16l7.500-10H8z" fill="#76bc2c" />
          </svg>
        </span>
      </footer>
    </div>
  );
}
